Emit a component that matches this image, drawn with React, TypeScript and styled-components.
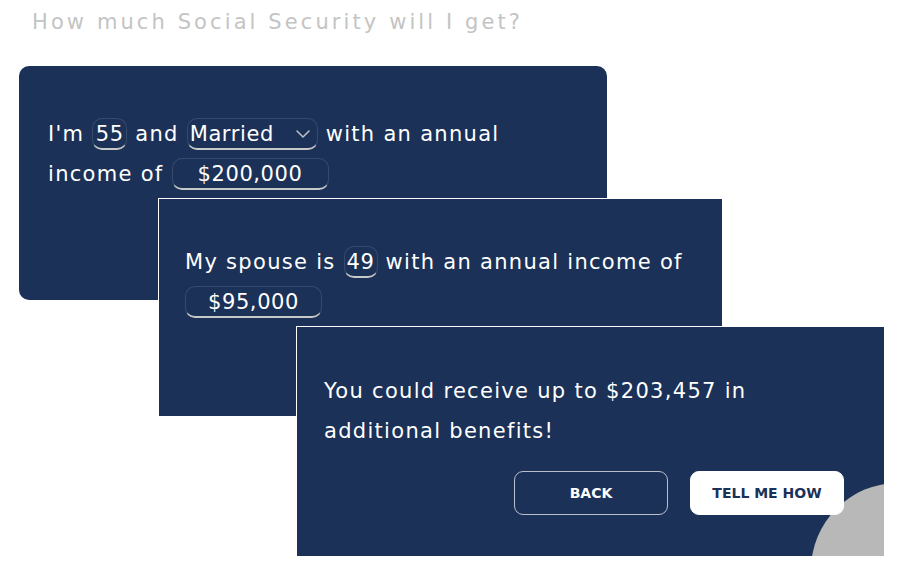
import React from 'react';
import styled, { createGlobalStyle } from 'styled-components';

const GlobalStyle = createGlobalStyle`
  html, body {
    margin: 0;
    padding: 0;
    background: #ffffff;
  }
  body {
    font-family: "DejaVu Sans", "Noto Sans", sans-serif;
  }
`

const Page = styled.div`
  width: 904px;
  height: 574px;
  overflow: hidden;
  position: relative;
`

const Title = styled.h1`
  margin: 0;
  padding: 9px 0 0 32px;
  font-size: 21px;
  font-weight: 400;
  letter-spacing: 3.1px;
  color: #c4c4c4;
  line-height: 26px;
`

const Stage = styled.div`
  position: relative;
  margin: 31px 0 0 19px;
`

const Card = styled.div<{ $left?: number; $top?: number; $w: number; $h: number; $layer?: boolean }>`
  box-sizing: border-box;
  width: ${p => p.$w}px;
  height: ${p => p.$h}px;
  background: #1b3157;
  color: #ffffff;
  overflow: hidden;
  ${p => p.$layer ? `
    position: absolute;
    left: ${p.$left}px;
    top: ${p.$top}px;
    border: 1px solid #ffffff;
  ` : `
    border-radius: 10px;
  `}
`

const Sentence = styled.p<{ $pad: string }>`
  margin: 0;
  padding: ${p => p.$pad};
  font-size: 21px;
  letter-spacing: 1.3px;
  line-height: 40px;
`

const Field = styled.span<{ $w: number; $align?: string }>`
  display: inline-block;
  box-sizing: border-box;
  width: ${p => p.$w}px;
  height: 32px;
  line-height: 30px;
  vertical-align: baseline;
  text-align: ${p => p.$align || 'center'};
  letter-spacing: 0.6px;
  border: 1px solid rgba(255, 255, 255, 0.12);
  border-bottom: 2px solid #c9c9c9;
  border-radius: 10px;
  padding: 0 2px;
  position: relative;
`

const Chevron = styled.svg`
  position: absolute;
  right: 6px;
  top: 10px;
`

const Actions = styled.div`
  display: flex;
  justify-content: flex-end;
  gap: 22px;
  padding: 20px 40px 0 0;
`

const Button = styled.button<{ $solid?: boolean }>`
  box-sizing: border-box;
  width: 154px;
  height: 44px;
  border-radius: 9px;
  font-family: "DejaVu Sans", sans-serif;
  font-weight: 700;
  font-size: 14px;
  cursor: pointer;
  background: ${p => p.$solid ? '#ffffff' : 'transparent'};
  color: ${p => p.$solid ? '#1b3157' : '#ffffff'};
  border: 1px solid ${p => p.$solid ? '#ffffff' : '#b9c0cc'};
  position: relative;
  z-index: 1;
`

const Blob = styled.div`
  position: absolute;
  left: 514px;
  top: 156px;
  width: 174px;
  height: 174px;
  border-radius: 50%;
  background: #b8b8b8;
`

export default function App() {
  return (
    <Page>
      <GlobalStyle />
      <Title>How much Social Security will I get?</Title>
      <Stage>
        <Card $w={588} $h={234}>
          <Sentence $pad="48px 80px 0 29px">
            I'm <Field $w={35}>55</Field> and{' '}
            <Field $w={131} $align="left">
              Married
              <Chevron width="16" height="10" viewBox="0 0 16 10" fill="none">
                <path d="M2 2l6 6 6-6" stroke="#b9bcc4" strokeWidth="1.6" strokeLinecap="round" strokeLinejoin="round" />
              </Chevron>
            </Field>{' '}
            with an annual income of <Field $w={157}>$200,000</Field>
          </Sentence>
        </Card>
        <Card $layer $left={139} $top={132} $w={565} $h={219}>
          <Sentence $pad="43px 20px 0 26px">
            My spouse is <Field $w={34}>49</Field> with an annual income of{' '}
            <Field $w={137}>$95,000</Field>
          </Sentence>
        </Card>
        <Card $layer $left={277} $top={260} $w={589} $h={231}>
          <Blob />
          <Sentence $pad="44px 120px 0 27px">
            You could receive up to $203,457 in additional benefits!
          </Sentence>
          <Actions>
            <Button>BACK</Button>
            <Button $solid>TELL ME HOW</Button>
          </Actions>
        </Card>
      </Stage>
    </Page>
  );
}
